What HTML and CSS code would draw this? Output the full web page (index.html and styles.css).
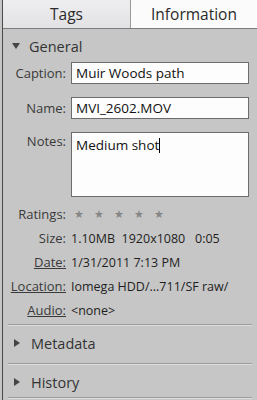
FILE: index.html
```html
<!DOCTYPE html>
<html lang="en">
<head>
    <meta charset="UTF-8">
    <meta name="viewport" content="width=device-width, initial-scale=1.0">
    <title>Information</title>
    <link rel="stylesheet" href="styles.css">
</head>
<body>
    <div class="panel">
        <div class="tabs">
            <div class="tab">Tags</div>
            <div class="tab active">Information</div>
        </div>

        <div class="section-head open">
            <span class="arrow down"></span>General
        </div>

        <div class="fields">
            <label class="lbl">Caption:</label>
            <div class="box">Muir Woods path</div>

            <label class="lbl">Name:</label>
            <div class="box">MVI_2602.MOV</div>

            <label class="lbl lbl-top">Notes:</label>
            <div class="box notes">Medium shot<span class="caret"></span></div>
        </div>

        <div class="info">
            <div class="row">
                <span class="lbl">Ratings:</span>
                <span class="stars"><span>★</span><span>★</span><span>★</span><span>★</span><span>★</span></span>
            </div>
            <div class="row">
                <span class="lbl">Size:</span>
                <span class="val">1.10MB&nbsp; 1920x1080&nbsp;&nbsp; 0:05</span>
            </div>
            <div class="row">
                <span class="lbl link">Date:</span>
                <span class="val">1/31/2011 7:13 PM</span>
            </div>
            <div class="row">
                <span class="lbl link">Location:</span>
                <span class="val">Iomega HDD/...711/SF raw/</span>
            </div>
            <div class="row">
                <span class="lbl link">Audio:</span>
                <span class="val">&lt;none&gt;</span>
            </div>
        </div>

        <div class="sep"></div>
        <div class="section-head">
            <span class="arrow right"></span>Metadata
        </div>
        <div class="sep"></div>
        <div class="section-head last">
            <span class="arrow right"></span>History
        </div>
        <div class="sep"></div>
    </div>
</body>
</html>
```

FILE: styles.css
```css
body {
    margin: 0;
    background-color: #c6c6c6;
    font-family: "Open Sans", "Liberation Sans", sans-serif;
    color: #1a1a1a;
}
.panel {
    margin-left: 2px;
    height: 400px;
    border-left: 1px solid #4a4a4a;
    background-color: #c6c6c6;
    overflow: hidden;
}
.tabs {
    display: flex;
    height: 28px;
    border-bottom: 1px solid #7c7c7c;
}
.tab {
    width: 127px;
    border-right: 1px solid #9a9a9a;
    background: linear-gradient(#eeeef0, #e2e2e4);
    text-align: center;
    line-height: 28px;
    font-size: 15.5px;
    font-weight: 500;
    color: #2a2a2a;
}
.tab.active {
    flex: 1;
    border-right: none;
    background: #fbfbfb;
}
.section-head {
    display: flex;
    align-items: center;
    height: 18px;
    padding: 8px 0 9px 9px;
    font-size: 14.5px;
    font-weight: 500;
    color: #333;
}
.section-head.open {
    padding: 8px 0 7px 9px;
}
.section-head.last {
    padding-bottom: 4px;
}
.arrow {
    display: inline-block;
    width: 0;
    height: 0;
}
.arrow.down {
    border-left: 4px solid transparent;
    border-right: 4px solid transparent;
    border-top: 6px solid #444;
    margin-right: 9px;
}
.arrow.right {
    border-top: 4px solid transparent;
    border-bottom: 4px solid transparent;
    border-left: 6px solid #444;
    margin-left: 2px;
    margin-right: 11px;
}
.fields {
    display: grid;
    grid-template-columns: 63px 178px;
    column-gap: 5px;
    row-gap: 13px;
    align-items: center;
}
.lbl {
    text-align: right;
    font-size: 13px;
    color: #3a3a3a;
}
.lbl-top {
    align-self: start;
}
.box {
    height: 20px;
    line-height: 20px;
    padding: 0 4px;
    border: 1px solid #6c6c6c;
    background-color: #fdfdfd;
    font-size: 13.5px;
    color: #111;
}
.box.notes {
    height: 62px;
    padding-top: 1px;
    line-height: 22px;
}
.caret {
    display: inline-block;
    width: 1px;
    height: 15px;
    background-color: #000;
    vertical-align: -3px;
}
.info {
    padding-top: 5px;
}
.row {
    display: grid;
    grid-template-columns: 63px 1fr;
    column-gap: 5px;
    align-items: center;
    height: 24px;
}
.val {
    font-size: 12.5px;
    color: #1e1e1e;
}
.link {
    text-decoration: underline;
}
.stars {
    display: flex;
    gap: 10px;
    font-size: 10.5px;
    color: #868686;
    padding-left: 3px;
}
.sep {
    margin: 2px 5px 0 5px;
    height: 1px;
    border-top: 1px solid #9c9c9c;
    background-color: #dedede;
}
```
